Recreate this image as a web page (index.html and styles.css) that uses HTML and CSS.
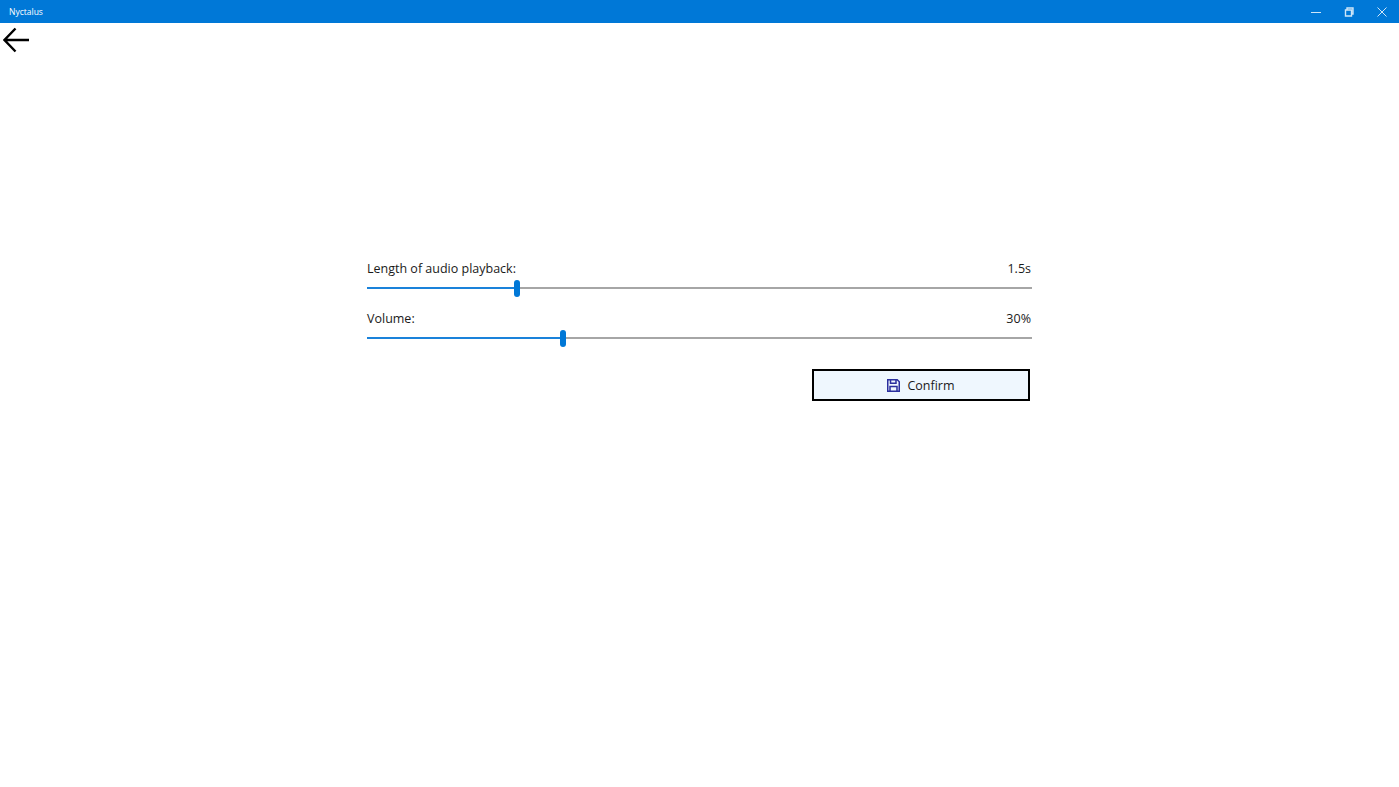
FILE: index.html
```html
<!DOCTYPE html>
<html lang="en">
<head>
    <meta charset="UTF-8">
    <meta name="viewport" content="width=device-width, initial-scale=1.0">
    <title>Nyctalus</title>
    <link rel="stylesheet" href="styles.css">
</head>
<body>
    <div class="titlebar">
        <span class="app-name">Nyctalus</span>
        <div class="window-controls">
            <div class="win-btn">
                <svg width="10" height="10" viewBox="0 0 10 10"><path d="M0 5.500h10" stroke="#cfe6f8" fill="none"/></svg>
            </div>
            <div class="win-btn">
                <svg width="10" height="10" viewBox="0 0 10 10"><path d="M1.500 3h6v6h-6zM3 3V1h6v6H7.500" stroke="#cfe6f8" stroke-width="1.400" fill="none"/></svg>
            </div>
            <div class="win-btn">
                <svg width="10" height="10" viewBox="0 0 10 10"><path d="M.5.5l9 9M9.500.5l-9 9" stroke="#cfe6f8" fill="none"/></svg>
            </div>
        </div>
    </div>

    <button class="back-btn">
        <svg width="26" height="26" viewBox="0 0 26 26"><path d="M12.500 1.500L1.500 13l11 11.500M1.500 13H26" stroke="#000" stroke-width="2.400" fill="none"/></svg>
    </button>

    <div class="settings">
        <div class="setting">
            <div class="setting-row">
                <span>Length of audio playback:</span>
                <span>1.5s</span>
            </div>
            <div class="slider">
                <div class="slider-fill" style="width: 22.5%"></div>
                <div class="slider-thumb" style="left: 22.5%"></div>
            </div>
        </div>
        <div class="setting">
            <div class="setting-row">
                <span>Volume:</span>
                <span>30%</span>
            </div>
            <div class="slider">
                <div class="slider-fill" style="width: 29.5%"></div>
                <div class="slider-thumb" style="left: 29.5%"></div>
            </div>
        </div>
        <div class="actions">
            <button class="confirm-btn">
                <svg width="13" height="13" viewBox="0 0 13 13"><path d="M.75.75h9.500l2 2v9.500H.75zM3.500.75v3.500h5.500V.75M3 12.250V7.500h7v4.750" stroke="#2b2f9e" stroke-width="1.500" fill="none"/></svg>
                <span>Confirm</span>
            </button>
        </div>
    </div>
</body>
</html>
```

FILE: styles.css
```css
body {
    font-family: 'Open Sans', 'Noto Sans', sans-serif;
    margin: 0;
    background-color: #fff;
    color: #1a1a1a;
}

.titlebar {
    display: flex;
    align-items: center;
    justify-content: space-between;
    height: 23px;
    background-color: #0078d7;
    color: #fff;
}

.app-name {
    margin-left: 9px;
    font-size: 8.5px;
}

.window-controls {
    display: flex;
}

.win-btn {
    display: flex;
    align-items: center;
    justify-content: center;
    width: 33.4px;
    height: 23px;
}

.back-btn {
    display: block;
    width: 32px;
    height: 34px;
    padding: 0 0 0 3px;
    border: none;
    background: none;
}

.back-btn svg {
    display: block;
}

.settings {
    width: 665px;
    margin: 202px auto 0;
}

.setting {
    margin-bottom: 20px;
}

.setting-row {
    display: flex;
    justify-content: space-between;
    padding-right: 1px;
    font-size: 12.5px;
    line-height: 19px;
    height: 19px;
}

.slider {
    position: relative;
    height: 2px;
    margin: 9px 0;
    background-color: #a6a6a6;
}

.slider-fill {
    height: 2px;
    background-color: #1a82da;
}

.slider-thumb {
    position: absolute;
    top: -7px;
    width: 6px;
    height: 17px;
    margin-left: -3px;
    border-radius: 3px;
    background-color: #0078d7;
}

.actions {
    display: flex;
    justify-content: flex-end;
    padding: 10px 2px 0 0;
}

.confirm-btn {
    display: flex;
    align-items: center;
    justify-content: center;
    gap: 7px;
    width: 218px;
    height: 32px;
    border: 2px solid #000;
    background-color: #eff7fe;
    color: #1a1a1a;
    font-family: inherit;
    font-size: 12.5px;
}
```
